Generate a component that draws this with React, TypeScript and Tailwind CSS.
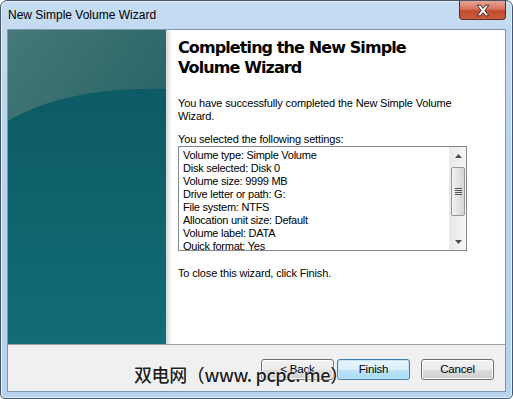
import React from "react";

const settings = [
  "Volume type: Simple Volume",
  "Disk selected: Disk 0",
  "Volume size: 9999 MB",
  "Drive letter or path: G:",
  "File system: NTFS",
  "Allocation unit size: Default",
  "Volume label: DATA",
  "Quick format: Yes",
];

const ui = { fontFamily: '"Liberation Sans", Arial, sans-serif' };

const WinButton = ({ label, primary }: { label: string; primary?: boolean }) => (
  <button
    className={
      "w-[73px] h-[21px] rounded-[3px] border text-[11.5px] tracking-[-0.2px] text-black leading-none " +
      (primary
        ? "border-[#3c7fb1] bg-[linear-gradient(#eaf6fd_0%,#d9f0fc_50%,#bee6fd_51%,#a7d9f5_100%)] shadow-[inset_0_0_0_1px_#c6e5f7]"
        : "border-[#707070] bg-[linear-gradient(#f2f2f2_0%,#ebebeb_50%,#dddddd_51%,#cfcfcf_100%)] shadow-[inset_0_0_0_1px_#fcfcfc]")
    }
    style={ui}
  >
    {label}
  </button>
);

const ScrollBar = () => (
  <div className="w-[17px] h-full flex flex-col bg-[linear-gradient(90deg,#e8e8e8,#f6f6f6)] border-l border-[#ececec]">
    <div className="h-[17px] flex items-center justify-center">
      <svg width="7" height="4" viewBox="0 0 7 4">
        <path d="M3.5 0 L7 4 L0 4 Z" fill="#4d4d4d" />
      </svg>
    </div>
    <div className="h-[3px]" />
    <div className="mx-[1px] h-[49px] rounded-[2px] border border-[#979797] bg-[linear-gradient(90deg,#f3f3f3,#e3e3e3_50%,#d6d6d6)] flex flex-col items-center justify-center gap-[1px]">
      <div className="w-[7px] h-[1px] bg-[#555]" />
      <div className="w-[7px] h-[1px] bg-[#555]" />
      <div className="w-[7px] h-[1px] bg-[#555]" />
      <div className="w-[7px] h-[1px] bg-[#555]" />
    </div>
    <div className="flex-1" />
    <div className="h-[17px] flex items-center justify-center">
      <svg width="7" height="4" viewBox="0 0 7 4">
        <path d="M0 0 L7 0 L3.5 4 Z" fill="#4d4d4d" />
      </svg>
    </div>
  </div>
);

export default function App() {
  return (
    <div className="w-[513px] h-[399px] relative overflow-hidden bg-white">
      <div className="w-[513px] h-[399px] flex flex-col rounded-t-[7px] rounded-b-[5px] border border-[#46566b] bg-[linear-gradient(180deg,#c5dcf2_0%,#bcd5ee_30%,#b7d3ef_100%)] shadow-[inset_0_0_0_1px_#e4f0fb]">
        {/* title bar */}
        <div className="h-[28px] flex items-start justify-between shrink-0">
          <div className="pl-[7px] pt-[6px] text-[12px] text-black leading-[16px]" style={ui}>
            New Simple Volume Wizard
          </div>
          <div className="mr-[6px] w-[47px] h-[19px] rounded-b-[4px] border border-t-0 border-[#5e2a22] bg-[linear-gradient(180deg,#e8a493_0%,#d4745e_45%,#c24a2f_55%,#cd5c3b_100%)] flex items-center justify-center">
            <svg width="16" height="13" viewBox="0 0 15 12">
              <path
                d="M2 1 L5 1 L7.5 4 L10 1 L13 1 L9.3 6 L13 11 L10 11 L7.5 8 L5 11 L2 11 L5.7 6 Z"
                fill="#fff"
                stroke="#3c2a2a"
                strokeWidth="0.9"
              />
            </svg>
          </div>
        </div>

        {/* client area */}
        <div className="mx-[6px] h-[363px] flex flex-col border border-[#8196ae] bg-[#f0f0f0]">
          <div className="h-[314px] flex bg-white">
            <div className="w-[158px] relative bg-[linear-gradient(180deg,#0c5861_0%,#0e5f68_40%,#126d78_100%)]">
              <svg className="absolute inset-0" width="158" height="314" viewBox="0 0 158 314">
                <defs>
                  <linearGradient id="hl" x1="0" y1="0" x2="1" y2="0.4">
                    <stop offset="0" stopColor="#467878" />
                    <stop offset="1" stopColor="#2c6769" />
                  </linearGradient>
                </defs>
                <path d="M0 0 H158 V59 C95 57 38 68 0 91 Z" fill="url(#hl)" />
              </svg>
            </div>
            <div className="w-[6px] bg-[linear-gradient(90deg,#d4d4d4,#ececec_50%,#ffffff)]" />
            <div className="flex-1 pl-[6px] pr-[14px] pt-[8px] flex flex-col text-black">
              <h1
                className="text-[16px] font-bold leading-[20px] tracking-[-0.9px]"
                style={{ fontFamily: '"DejaVu Sans", Verdana, sans-serif' }}
              >
                Completing the New Simple
                <br />
                Volume Wizard
              </h1>
              <p className="mt-[19px] text-[11px] leading-[13px] tracking-[-0.15px]" style={ui}>
                You have successfully completed the New Simple Volume
                <br />
                Wizard.
              </p>
              <p className="mt-[10px] text-[11px] leading-[13px] tracking-[-0.15px]" style={ui}>
                You selected the following settings:
              </p>
              <div className="mt-0 w-[289px] h-[105px] flex border border-[#828790] bg-white">
                <div className="flex-1 overflow-hidden pl-[4px] pt-[2px] text-[11px] leading-[13px] tracking-[-0.25px]" style={ui}>
                  {settings.map((s) => (
                    <div key={s} className="whitespace-nowrap">
                      {s}
                    </div>
                  ))}
                </div>
                <ScrollBar />
              </div>
              <p className="mt-[16px] text-[11px] leading-[13px] tracking-[-0.15px]" style={ui}>
                To close this wizard, click Finish.
              </p>
            </div>
          </div>
          <div className="h-[1px] bg-[#a0a0a0]" />
          <div className="flex-1 flex items-start justify-end pt-[14px] pr-[11px]">
            <WinButton label="< Back" />
            <div className="w-[3px]" />
            <WinButton label="Finish" primary />
            <div className="w-[11px]" />
            <WinButton label="Cancel" />
          </div>
        </div>
      </div>

      {/* watermark */}
      <div
        className="absolute left-[134px] top-[362px] text-[18px] font-medium leading-[24px] tracking-[-0.4px] text-[#1e1e1e] whitespace-nowrap [text-shadow:0_0_2px_#fff,0_0_2px_#fff,0_0_1px_#fff]"
        style={{ fontFamily: '"Noto Sans CJK SC", "Noto Sans", sans-serif' }}
      >
        双电网（www. pcpc. me）
      </div>
    </div>
  );
}
